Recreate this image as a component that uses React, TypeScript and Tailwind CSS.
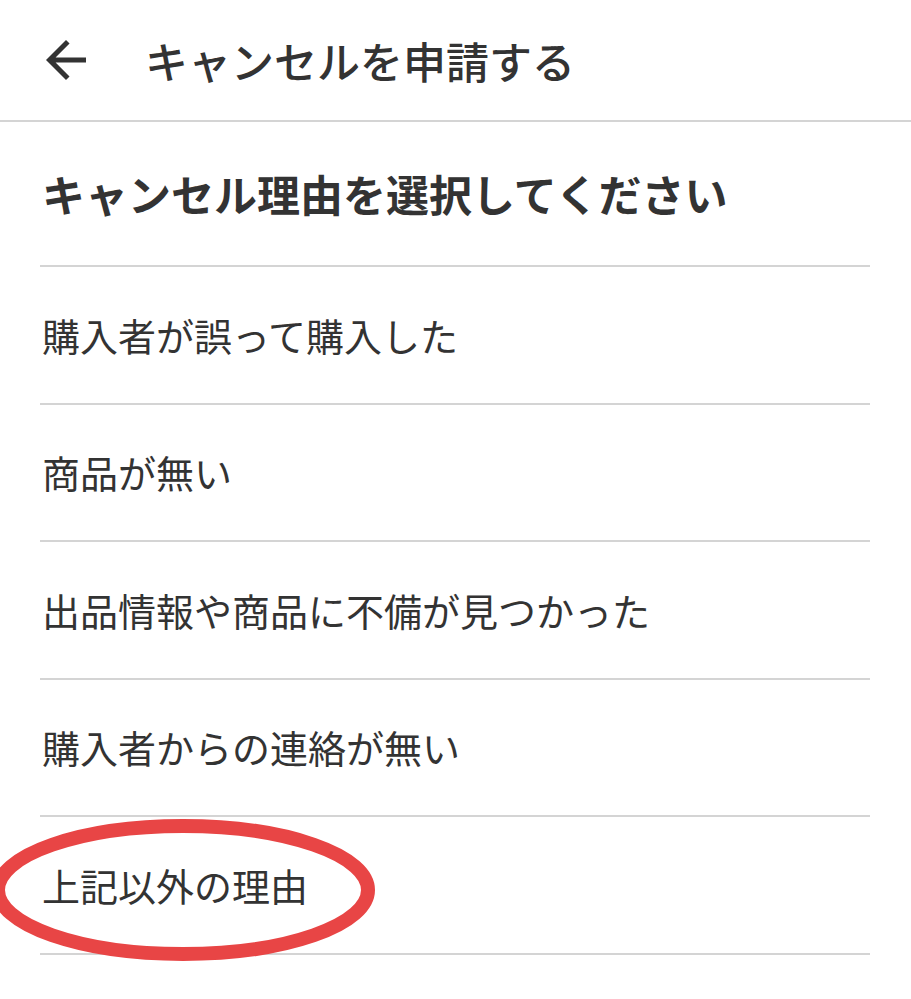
import React from "react";

const items = [
  "購入者が誤って購入した",
  "商品が無い",
  "出品情報や商品に不備が見つかった",
  "購入者からの連絡が無い",
];

export default function App() {
  return (
    <div
      className="w-[911px] h-[999px] bg-white text-[#333333] overflow-hidden"
      style={{ fontFamily: '"Noto Sans CJK JP", "Noto Sans", sans-serif' }}
    >
      <div className="h-[122px] flex items-center border-b-2 border-[#d4d4d4]">
        <div className="w-[145px] pl-[36px] flex items-center">
          <svg width="60" height="60" viewBox="0 0 24 24" className="text-[#333333]">
            <path
              d="M20 11H7.83l5.59-5.59L12 4l-8 8 8 8 1.41-1.41L7.83 13H20v-2z"
              fill="currentColor"
            />
          </svg>
        </div>
        <span className="text-[43px] leading-none font-medium">キャンセルを申請する</span>
      </div>
      <div className="mx-[40px] mr-[41px]">
        <div className="h-[145px] flex items-center border-b-2 border-[#d4d4d4]">
          <span className="text-[43px] leading-none font-bold pl-[2px]">キャンセル理由を選択してください</span>
        </div>
        {items.map((t) => (
          <div key={t} className="h-[137.5px] flex items-center border-b-2 border-[#d4d4d4]">
            <span className="text-[38px] leading-none pl-[2px]">{t}</span>
          </div>
        ))}
        <div className="relative h-[137.5px] flex items-center border-b-2 border-[#d4d4d4]">
          <span className="text-[38px] leading-none pl-[2px]">上記以外の理由</span>
          <svg
            className="absolute left-[-40px] top-[-2px] pointer-events-none"
            width="400"
            height="150"
            viewBox="0 0 400 150"
          >
            <ellipse cx="183" cy="75" rx="185" ry="64" fill="none" stroke="#e84545" strokeWidth="14" />
          </svg>
        </div>
      </div>
    </div>
  );
}
